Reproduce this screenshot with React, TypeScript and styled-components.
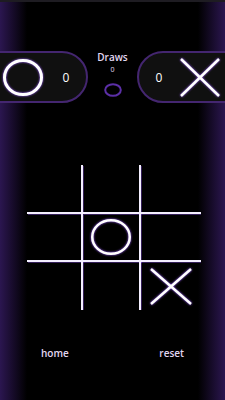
import React from "react";
import styled, { createGlobalStyle } from "styled-components";

const Global = createGlobalStyle`
  html, body { margin: 0; padding: 0; background: #000; }
  body { width: 225px; height: 400px; overflow: hidden; font-family: "Open Sans", "DejaVu Sans", sans-serif; }
`;

const Screen = styled.div`
  width: 225px;
  height: 400px;
  box-sizing: border-box;
  border-top: 2px solid #1e1c22;
  background: linear-gradient(
    to right,
    #2b1650 0px,
    #1a0d30 11px,
    #000 27px,
    #000 198px,
    #1a0d30 214px,
    #2b1650 225px
  );
  display: flex;
  flex-direction: column;
  overflow: hidden;
`;

const ScoreBar = styled.div`
  display: flex;
  align-items: flex-start;
  margin-top: 49px;
  height: 58px;
`;

const Pill = styled.div<{ $side: "left" | "right" }>`
  flex: 0 0 100px;
  height: 52px;
  box-sizing: border-box;
  background: #101010;
  border: 2px solid #442670;
  display: flex;
  align-items: center;
  ${(p) =>
    p.$side === "left"
      ? `margin-left: -12px; border-radius: 0 26px 26px 0; padding-left: 13px; gap: 19px;`
      : `margin-right: -12px; border-radius: 26px 0 0 26px; padding-left: 16px; gap: 17px;`}
`;

const Score = styled.span`
  color: #fff;
  font-size: 12px;
  width: 8px;
  text-align: center;
`;

const Middle = styled.div`
  flex: 1;
  display: flex;
  flex-direction: column;
  align-items: center;
`;

const DrawLabel = styled.div`
  color: #e2d8f2;
  font-size: 10px;
  font-weight: 600;
  line-height: 13px;
`;

const DrawCount = styled.div`
  color: #e2d8f2;
  font-size: 7px;
  line-height: 10px;
  margin-top: 1px;
`;

const Glow = styled.svg`
  display: block;
  overflow: visible;
  filter: drop-shadow(0 0 1px #9a5cff);
`;

const Board = styled.div`
  display: grid;
  grid-template-columns: 56px 58px 60px;
  grid-template-rows: 49px 48px 48px;
  margin-top: 56px;
  margin-left: 27px;
  width: 174px;
`;

const Cell = styled.div<{ $right: boolean; $bottom: boolean }>`
  box-sizing: border-box;
  display: flex;
  align-items: center;
  justify-content: center;
  border-right: ${(p) => (p.$right ? "2px solid #f4efff" : "none")};
  border-bottom: ${(p) => (p.$bottom ? "2px solid #f4efff" : "none")};
  box-shadow: ${(p) =>
    p.$right && p.$bottom
      ? "1px 1px 0 0 rgba(150,90,255,0.35)"
      : p.$right
      ? "1px 0 0 0 rgba(150,90,255,0.35)"
      : p.$bottom
      ? "0 1px 0 0 rgba(150,90,255,0.35)"
      : "none"};
`;

const Footer = styled.div`
  display: flex;
  justify-content: space-between;
  padding: 0 41px 0 41px;
  margin-top: 37px;
`;

const NavButton = styled.span`
  color: #e2d8f2;
  font-size: 10px;
  font-weight: 600;
  line-height: 13px;
`;

const OMark = ({ w, h, sw }: { w: number; h: number; sw: number }) => (
  <Glow width={w} height={h} viewBox={`0 0 ${w} ${h}`}>
    <ellipse cx={w / 2} cy={h / 2} rx={w / 2 - sw / 2} ry={h / 2 - sw / 2} fill="none" stroke="#fff" strokeWidth={sw} />
  </Glow>
);

const XMark = ({ w, h, sw }: { w: number; h: number; sw: number }) => (
  <Glow width={w} height={h} viewBox={`0 0 ${w} ${h}`}>
    <line x1={1} y1={1} x2={w - 1} y2={h - 1} stroke="#fff" strokeWidth={sw} />
    <line x1={w - 1} y1={1} x2={1} y2={h - 1} stroke="#fff" strokeWidth={sw} />
  </Glow>
);

const board: (null | "X" | "O")[] = [null, null, null, null, "O", null, null, null, "X"];

export default function App() {
  return (
    <>
      <Global />
      <Screen>
        <ScoreBar>
          <Pill $side="left">
            <OMark w={40} h={37} sw={3} />
            <Score>0</Score>
          </Pill>
          <Middle>
            <DrawLabel>Draws</DrawLabel>
            <DrawCount>0</DrawCount>
            <svg width="18" height="14" viewBox="0 0 18 14" style={{ marginTop: 8 }}>
              <ellipse cx="9" cy="7" rx="7.8" ry="5.8" fill="none" stroke="#5b2fa6" strokeWidth="2" />
            </svg>
          </Middle>
          <Pill $side="right">
            <Score>0</Score>
            <XMark w={40} h={39} sw={2.5} />
          </Pill>
        </ScoreBar>
        <Board>
          {board.map((v, i) => (
            <Cell key={i} $right={i % 3 < 2} $bottom={i < 6}>
              {v === "O" && <OMark w={40} h={36} sw={2.5} />}
              {v === "X" && <XMark w={42} h={37} sw={2.5} />}
            </Cell>
          ))}
        </Board>
        <Footer>
          <NavButton>home</NavButton>
          <NavButton>reset</NavButton>
        </Footer>
      </Screen>
    </>
  );
}
